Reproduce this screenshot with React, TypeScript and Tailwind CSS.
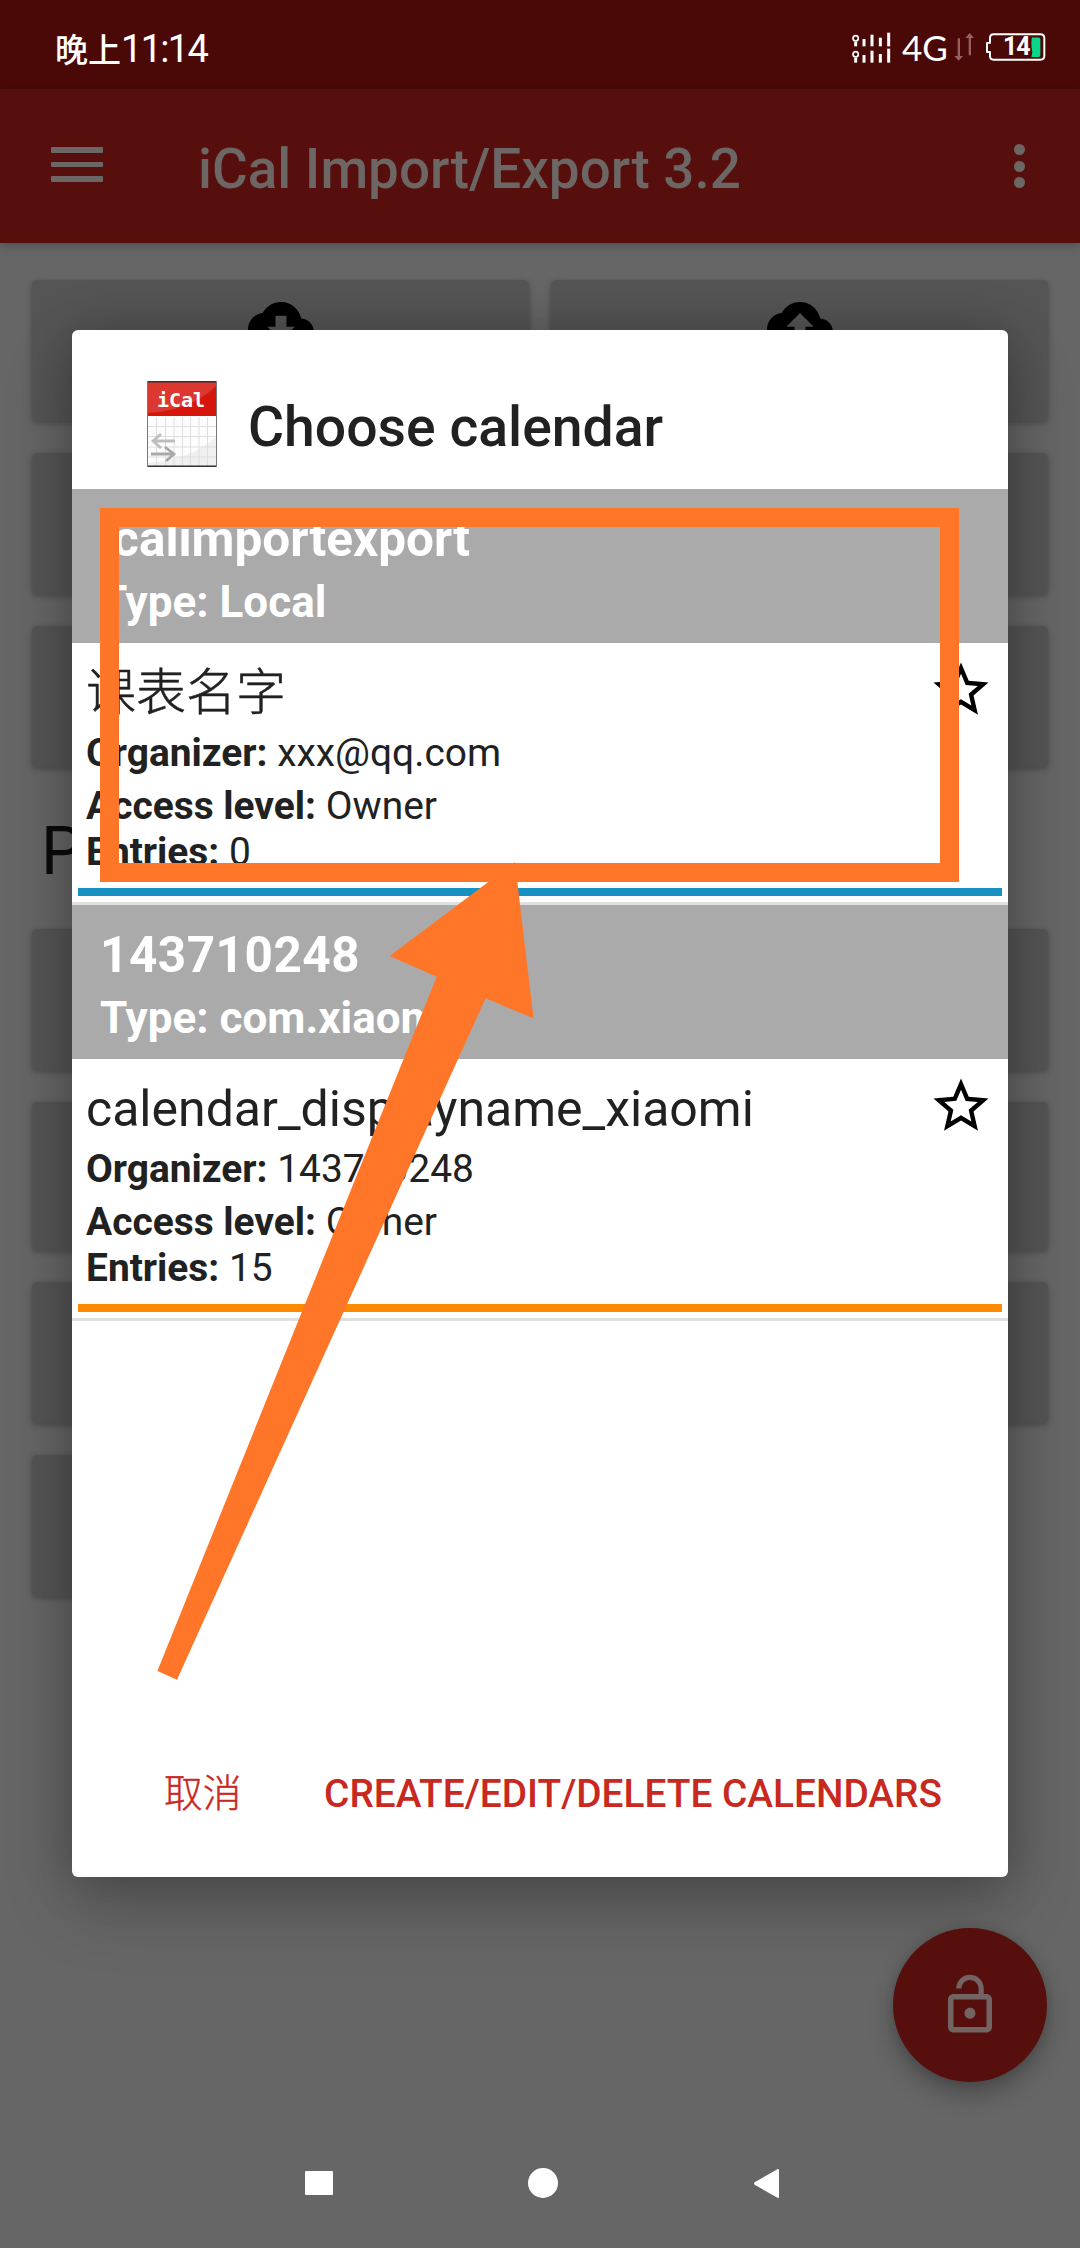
import React from "react";

const CLOUD =
  "M19.35 10.04C18.67 6.59 15.64 4 12 4 9.11 4 6.6 5.64 5.35 8.04 2.34 8.36 0 10.91 0 14c0 3.31 2.69 6 6 6h13c2.76 0 5-2.24 5-5 0-2.64-2.05-4.78-4.65-4.96z";

function Signal() {
  const bars = [
    [75, 52, 74], [99, 39, 74], [124, 48, 74], [149, 33, 74],
    [75, 100, 123], [99, 87, 123], [124, 97, 123], [149, 81, 123],
    [50, 60, 74], [50, 108, 123],
  ];
  return (
    <svg className="h-[31px] w-[41px]" viewBox="36 31 123 93" stroke="#fff" fill="none">
      <circle cx="50" cy="50" r="8" strokeWidth="5" />
      <circle cx="50" cy="98" r="8" strokeWidth="5" />
      {bars.map(([x, a, b], i) => (
        <path key={i} d={`M${x} ${a}V${b}`} strokeWidth="9" />
      ))}
    </svg>
  );
}

function StatusBar() {
  return (
    <div className="flex h-[89px] items-center bg-[#4a0907] pl-[55px] pr-[34px] text-white">
      <div className="flex items-baseline pt-[11px]">
        <span className="text-[33px] leading-[40px] font-medium">晚上</span>
        <span className="text-[38px] leading-[40px] tracking-[-1.7px]">11:14</span>
      </div>
      <div className="ml-auto flex items-center pt-[5px]">
        <Signal />
        <span className="ml-[10px] w-[47px] pb-[1px] font-['Lato'] text-[35px] leading-[36px]">4G</span>
        <svg className="ml-[5px] h-[28px] w-[20px]" viewBox="347 38 60 84" fill="#96605f">
          <path d="M358 54h7v53h9l-13 14-13-14h10zM391 105h7V53h9l-13-15-13 15h10z" />
        </svg>
        <div className="relative ml-[11px] h-[28px] w-[61px]">
          <svg className="size-full" viewBox="438 37 183 85" fill="none">
            <path
              d="M463 41H605Q617 41 617 53V107Q617 118 605 118H463Q452 118 452 107V95H443V67H452V53Q452 41 463 41Z"
              stroke="#fff"
              strokeWidth="6"
              strokeLinejoin="round"
            />
            <path d="M579 51H600Q605 51 605 57V104Q605 110 600 110H578Q583 95 578 78Q577 65 579 51Z" fill="#08d68a" />
          </svg>
          <span className="absolute left-[18px] top-[1px] text-[25px] leading-[25px] font-bold tracking-[-1px]">14</span>
        </div>
      </div>
    </div>
  );
}

function AppBar() {
  return (
    <div className="relative z-10 flex h-[154px] items-center bg-[#560f0d] pl-[51px] pr-[55px] shadow-[0_2px_10px_rgba(0,0,0,0.25)]">
      <div className="mb-[3px] flex flex-col gap-[9px]">
        <div className="h-[5.6px] w-[52px] rounded-[1px] bg-[#6c6665]" />
        <div className="h-[5.6px] w-[52px] rounded-[1px] bg-[#6c6665]" />
        <div className="h-[5.6px] w-[52px] rounded-[1px] bg-[#6c6665]" />
      </div>
      <h1 className="ml-[95px] pt-[5px] text-[54.8px] leading-[64px] font-medium whitespace-nowrap text-[#6c6665]">
        iCal Import/Export 3.2
      </h1>
      <div className="ml-auto flex flex-col gap-[5.6px]">
        <div className="size-[11px] rounded-full bg-[#6c6665]" />
        <div className="size-[11px] rounded-full bg-[#6c6665]" />
        <div className="size-[11px] rounded-full bg-[#6c6665]" />
      </div>
    </div>
  );
}

function Tile({ children, tall }: { children?: React.ReactNode; tall?: boolean }) {
  return (
    <div
      className={`flex w-[497px] justify-center rounded-[5px] bg-[#555] pt-[11px] shadow-[0_2px_6px_rgba(0,0,0,0.28)] ${
        tall ? "h-[148px]" : "h-[141px]"
      }`}
    >
      {children}
    </div>
  );
}

function Backdrop() {
  return (
    <div className="flex-1 px-[32px] pt-[37px]">
      <div className="grid grid-cols-2 gap-x-[22px] gap-y-[32px]">
        <Tile>
          <svg className="size-[66px]" viewBox="0 0 24 24">
            <path d={CLOUD + "M17 13l-5 5-5-5h3V9h4v4h3z"} fillRule="evenodd" />
          </svg>
        </Tile>
        <Tile>
          <svg className="size-[66px]" viewBox="0 0 24 24">
            <path d={CLOUD + "M14 13v4h-4v-4H7l5-5 5 5h-3z"} fillRule="evenodd" />
          </svg>
        </Tile>
        <Tile />
        <Tile />
        <Tile />
        <Tile />
      </div>
      <div className="flex h-[162px] items-center pl-[9px] pt-[7px] text-[66px] text-[#0b0b0b]">P</div>
      <div className="grid grid-cols-2 gap-x-[22px] gap-y-[32px]">
        <Tile />
        <Tile />
        <Tile tall />
        <Tile tall />
        <Tile />
        <Tile />
        <Tile />
      </div>
    </div>
  );
}

function AppIcon() {
  return (
    <div className="relative h-[86px] w-[70px]">
      <svg className="size-full" viewBox="0 0 70 86">
        <rect x="0.5" y="0.5" width="69" height="85" rx="1" fill="#fdfdfd" stroke="#777" />
        <path d="M1 82Q45 78 69 56V85H1Z" fill="#f0f0f0" />
        <path
          d="M9.5 36V85M18.5 36V85M27 36V85M35.5 36V85M43.5 36V85M52 36V85M60.5 36V85M1 45.5H69M1 55.5H69M1 66H69M1 76H69"
          stroke="#dedede"
        />
        <rect x="1" y="1" width="68" height="34" fill="#d6150b" />
        <path d="M1 1H69V5Q45 29 1 32Z" fill="#dc3830" />
        <path d="M0.5 0.7H69.5M0.5 85.3H69.5" stroke="#333" strokeWidth="1.4" />
        <path d="M28 60H6M14 53L6 60L14 67" stroke="#bdbdbd" strokeWidth="2.8" fill="none" />
        <path d="M4 73H27M18 66L27 73L19 80" stroke="#a9a9a9" strokeWidth="2.8" fill="none" />
      </svg>
      <span className="absolute left-[10px] top-[7px] font-['DejaVu_Sans_Mono'] text-[20px] leading-[24px] font-bold text-white">
        iCal
      </span>
    </div>
  );
}

type GroupProps = {
  account: React.ReactNode;
  type: string;
  name: React.ReactNode;
  organizer: string;
  entries: string;
  children: React.ReactNode;
};

function Group({ account, type, name, organizer, entries, children }: GroupProps) {
  return (
    <section className="border-b-[3px] border-[#e0e0e0]">
      <div className="h-[154px] bg-[#aaa] pl-[28px] pt-[20px] font-bold text-white">
        <div className="text-[49.5px] leading-[60px]">{account}</div>
        <div className="pt-[7px] text-[44px] leading-[52px]">{type}</div>
      </div>
      <div className="flex h-[245px] justify-between pl-[14px] pr-[14px] text-[38.9px] leading-[46px] text-[#212121]">
        <div className="whitespace-nowrap">
          <div className="h-[87px] pt-[20px] text-[50px] leading-[60px]">{name}</div>
          <div>
            <b>Organizer:</b> {organizer}
          </div>
          <div className="pt-[7px]">
            <b>Access level:</b> Owner
          </div>
          <div>
            <b>Entries:</b> {entries}
          </div>
        </div>
        <svg className="mt-[14px] size-[66px]" viewBox="0 0 24 24">
          <path d="M22 9.24l-7.19-.62L12 2 9.19 8.63 2 9.24l5.46 4.73L5.82 21 12 17.27 18.18 21l-1.63-7.03L22 9.24zM12 15.4l-3.76 2.27 1-4.28-3.32-2.88 4.38-.38L12 6.1l1.71 4.04 4.38.38-3.32 2.88 1 4.28L12 15.4z" />
        </svg>
      </div>
      {children}
      <div className="h-[6px]" />
    </section>
  );
}

function Dialog() {
  return (
    <div className="absolute left-[72px] top-[330px] z-20 flex h-[1547px] w-[936px] flex-col rounded-[6px] bg-white shadow-[0_30px_70px_rgba(0,0,0,0.2),0_0_50px_rgba(0,0,0,0.22)]">
      <header className="flex h-[159px] pl-[75px] pt-[51px]">
        <AppIcon />
        <h2 className="ml-[31px] pt-[15px] text-[55.3px] leading-[64px] font-medium whitespace-nowrap text-[#212121]">
          Choose calendar
        </h2>
      </header>
      <Group
        account="icalimportexport"
        type="Type: Local"
        name={<span className="font-light [-webkit-text-stroke:0.5px]">课表名字</span>}
        organizer="xxx@qq.com"
        entries="0"
      >
        <div className="mx-[6px] h-[8px] bg-[#1791c1]" />
      </Group>
      <Group
        account={<span className="tracking-[0.5px]">143710248</span>}
        type="Type: com.xiaomi"
        name="calendar_displayname_xiaomi"
        organizer="143710248"
        entries="15"
      >
        <div className="mx-[6px] h-[8px] bg-[#ff8a00]" />
      </Group>
      <footer className="mt-auto flex h-[166px] items-start justify-between pl-[92px] pr-[66px] text-[38.8px] leading-[46px] whitespace-nowrap text-[#c9281f]">
        <button className="pt-[60px] font-light [-webkit-text-stroke:0.4px]">取消</button>
        <button className="pt-[60px] font-medium">CREATE/EDIT/DELETE CALENDARS</button>
      </footer>
    </div>
  );
}

function Annotation() {
  return (
    <>
      <div className="absolute left-[100px] top-[508px] z-30 h-[374px] w-[859px] border-[19px] border-[#ff7628]" />
      <svg className="absolute left-[150px] top-[860px] z-30 h-[830px] w-[390px]" viewBox="150 860 390 830">
        <path
          d="M157.4 1671L436.7 976.7L389.5 956L515 862L533.5 1018.3L485.6 998.3L177 1679.7Z"
          fill="#ff7628"
        />
      </svg>
    </>
  );
}

function NavBar() {
  return (
    <div className="flex h-[130px] items-center pl-[305px]">
      <div className="h-[24px] w-[28px] rounded-[1px] bg-white" />
      <div className="ml-[195px] size-[30px] rounded-full bg-white" />
      <svg className="ml-[195px] h-[31px] w-[27px]" viewBox="0 0 27 31">
        <path d="M2 14L24 1.5Q26 .5 26 2V29Q26 30.5 24 29.5L2 17Q0 15.5 2 14Z" fill="#fff" />
      </svg>
    </div>
  );
}

export default function App() {
  return (
    <div className="relative flex h-[2248px] w-[1080px] flex-col overflow-hidden bg-[#666] font-['Roboto','Noto_Sans_CJK_SC',sans-serif]">
      <StatusBar />
      <AppBar />
      <Backdrop />
      <NavBar />
      <div className="absolute left-[893px] top-[1928px] z-30 flex size-[154px] items-center justify-center rounded-full bg-[#560f0d] shadow-[0_12px_24px_rgba(0,0,0,0.28),0_0_10px_rgba(0,0,0,0.12)]">
        <svg className="size-[66px]" viewBox="0 0 24 24" fill="#726463">
          <path d="M12 17c1.1 0 2-.9 2-2s-.9-2-2-2-2 .9-2 2 .9 2 2 2zm6-9h-1V6c0-2.76-2.24-5-5-5S7 3.24 7 6h1.9c0-1.71 1.39-3.1 3.1-3.1 1.71 0 3.1 1.39 3.1 3.1v2H6c-1.1 0-2 .9-2 2v10c0 1.1.9 2 2 2h12c1.1 0 2-.9 2-2V10c0-1.1-.9-2-2-2zm0 12H6V10h12v10z" />
        </svg>
      </div>
      <Dialog />
      <Annotation />
    </div>
  );
}
